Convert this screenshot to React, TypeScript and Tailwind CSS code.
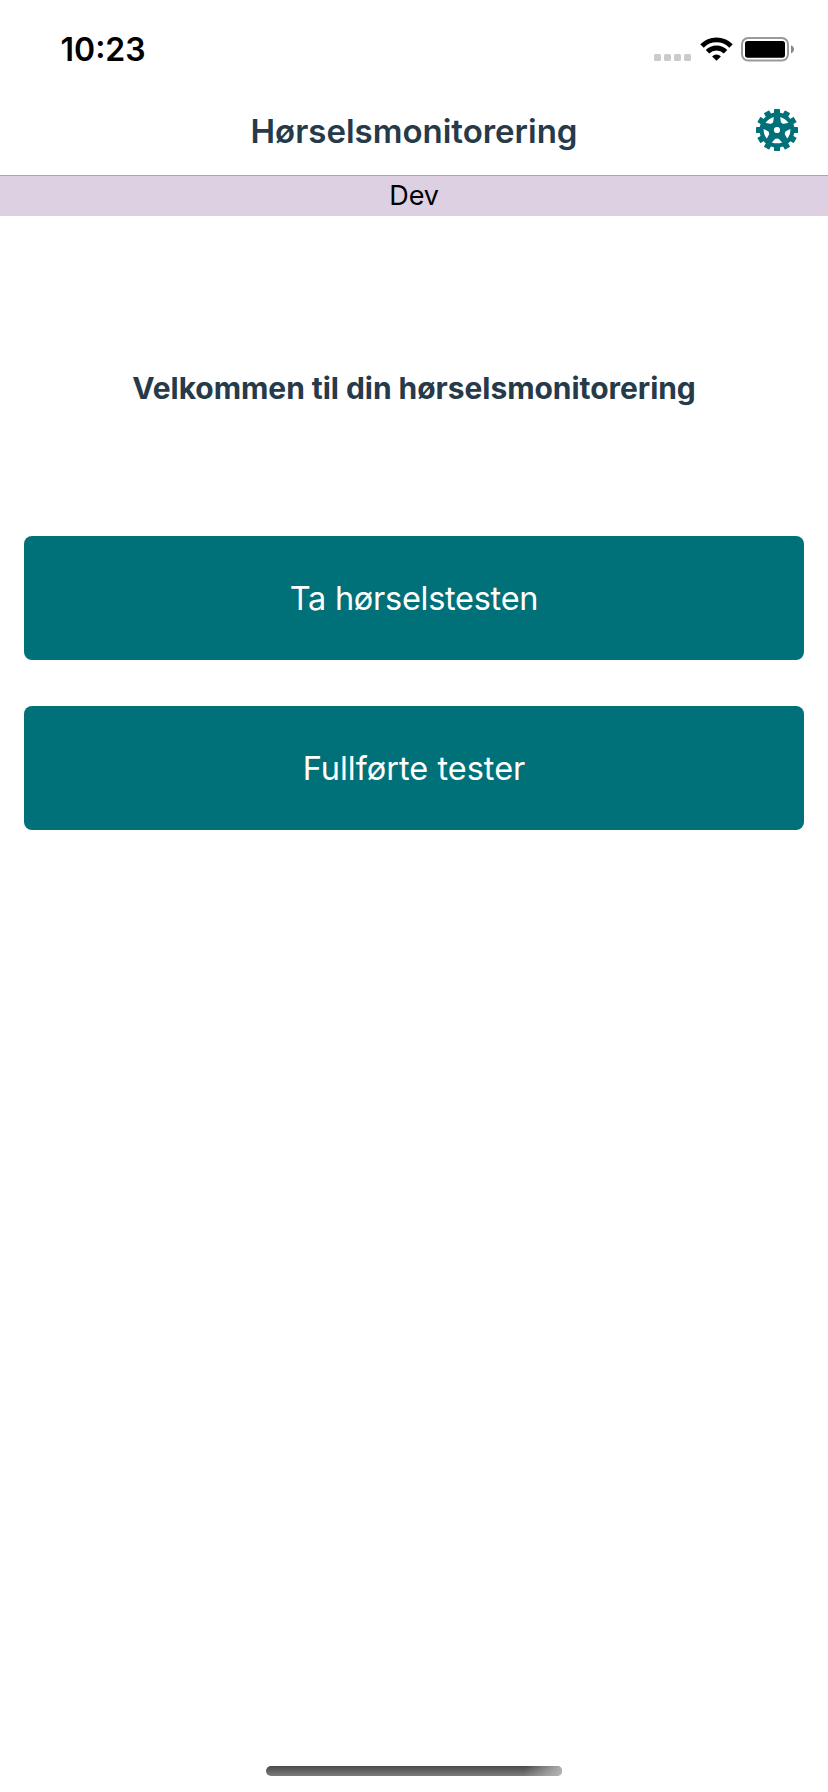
const TEETH = [0, 30, 60, 90, 120, 150, 180, 210, 240, 270, 300, 330];
const SPOKES = [0, 72, 144, 216, 288];

function GearIcon() {
  return (
    <svg width="42" height="42" viewBox="-21 -21 42 42" fill="#007178">
      {TEETH.map((a) => (
        <rect key={a} x="-3" y="-21" width="6" height="7" rx="0.4" transform={`rotate(${a})`} />
      ))}
      <circle r="17.5" />
      <circle r="11" fill="none" stroke="#fff" strokeWidth="4.7" />
      {SPOKES.map((a) => (
        <path key={a} d="M-4 -7L-3 -14H3L4 -7Z" transform={`rotate(${a})`} />
      ))}
      <circle r="3.1" fill="#fff" />
    </svg>
  );
}

function SignalDots() {
  return (
    <div className="flex gap-[3px] pt-[17px]">
      <i className="size-[7px] rounded-[1.5px] bg-[#cbcbcb]" />
      <i className="size-[7px] rounded-[1.5px] bg-[#cbcbcb]" />
      <i className="size-[7px] rounded-[1.5px] bg-[#cbcbcb]" />
      <i className="size-[7px] rounded-[1.5px] bg-[#cbcbcb]" />
    </div>
  );
}

function WifiIcon() {
  return (
    <svg className="ml-[9px]" width="33" height="24" viewBox="0 0 33 24" fill="none" stroke="#000" strokeWidth="4.9">
      <path d="M2 9A20.3 20.3 0 0 1 31 9" />
      <path d="M7.5 14.8A12.6 12.6 0 0 1 25.5 14.8" />
      <path d="M12.1 19.4A6.3 6.3 0 0 1 20.9 19.4L16.5 23.8Z" fill="#000" stroke="none" />
    </svg>
  );
}

function BatteryIcon() {
  return (
    <svg className="ml-2" width="54" height="25" viewBox="0 0 54 25">
      <rect x="1" y="1" width="46" height="22.5" rx="6.2" fill="none" stroke="#999" strokeWidth="2" />
      <rect x="4" y="4" width="40" height="16.7" rx="2.6" fill="#000" />
      <path d="M50 8.3C52 9 53 10.6 53 12.3S52 15.6 50 16.4Z" fill="#888" />
    </svg>
  );
}

function MenuButton({ label, tracking }: { label: string; tracking: string }) {
  return (
    <button className="flex h-[124px] w-full items-center justify-center rounded-lg bg-[#007178] pt-0.5 text-white">
      <span className={`text-[32.5px] leading-10 ${tracking}`}>{label}</span>
    </button>
  );
}

export default function App() {
  return (
    <div className="flex h-[1792px] w-[828px] flex-col bg-white font-['Inter',sans-serif]">
      <div className="flex h-[88px] shrink-0 items-start justify-between pr-[33px] pl-[60.5px]">
        <span className="mt-[30px] text-[32px] leading-10 font-semibold text-black">10:23</span>
        <div className="mt-[37px] flex items-start">
          <SignalDots />
          <WifiIcon />
          <BatteryIcon />
        </div>
      </div>

      <header className="grid h-[88px] shrink-0 grid-cols-[72px_1fr_72px] items-center border-b border-[#a7a7aa]">
        <span />
        <h1 className="pb-0.5 text-center text-[33px] leading-10 font-semibold text-[#263a4a]">Hørselsmonitorering</h1>
        <button className="mt-[-3px] flex" aria-label="Innstillinger">
          <GearIcon />
        </button>
      </header>

      <div className="flex h-10 shrink-0 items-center justify-center bg-[#dcd0e2] text-[27px] leading-[38px] tracking-[-0.2px] text-black">
        Dev
      </div>

      <main className="flex flex-1 flex-col px-6">
        <h2 className="mt-[152px] text-center text-[30px] leading-10 font-bold tracking-[-0.05px] text-[#263a4a]">
          Velkommen til din hørselsmonitorering
        </h2>
        <div className="mt-32 flex flex-col gap-[46px]">
          <MenuButton label="Ta hørselstesten" tracking="tracking-[-0.28px]" />
          <MenuButton label="Fullførte tester" tracking="tracking-normal" />
        </div>
      </main>

      <div className="flex shrink-0 justify-center pb-4">
        <div className="h-[10px] w-[296px] overflow-hidden rounded-full bg-linear-to-b from-[#4a4a4a] to-[#7c7c7c]">
          <div className="ml-auto h-full w-[46px] bg-linear-[110deg] from-[#b5b5b500] from-20% to-[#b8b8b8]" />
        </div>
      </div>
    </div>
  );
}
